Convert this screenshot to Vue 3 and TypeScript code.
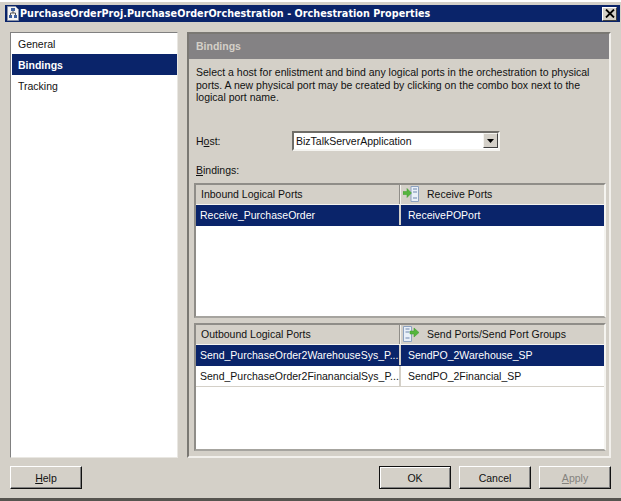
<script setup lang="ts">
const navItems = [
  { label: 'General', active: false },
  { label: 'Bindings', active: true },
  { label: 'Tracking', active: false },
]
const outboundRows = [
  { left: 'Send_PurchaseOrder2WarehouseSys_P...', right: 'SendPO_2Warehouse_SP', active: true },
  { left: 'Send_PurchaseOrder2FinanancialSys_P...', right: 'SendPO_2Financial_SP', active: false },
]
</script>

<template>
  <div class="window">
    <div class="titlebar">
      <svg class="app-icon" width="14" height="15" viewBox="0 0 14 15">
        <path d="M1.5.5h8l3 3v11h-11z" fill="#f4f4f4" stroke="#8a93a8" />
        <rect x="5" y="2" width="4" height="3" fill="#3d5f9e" />
        <rect x="3" y="9" width="3" height="3" fill="#3d5f9e" />
        <rect x="8" y="9" width="3" height="3" fill="#3d5f9e" />
        <path d="M7 5v2M4.500 9V7h5v2" fill="none" stroke="#555" />
      </svg>
      <span class="title">PurchaseOrderProj.PurchaseOrderOrchestration - Orchestration Properties</span>
      <div class="close">
        <svg width="10" height="9" viewBox="0 0 10 9">
          <path d="M1 0.500l8 8M9 0.500l-8 8" stroke="#000" stroke-width="1.800" fill="none" />
        </svg>
      </div>
    </div>

    <div class="main">
      <ul class="nav">
        <li v-for="item in navItems" :key="item.label" class="nav-item" :class="{ active: item.active }">
          {{ item.label }}
        </li>
      </ul>

      <section class="panel">
        <header class="panel-head">Bindings</header>
        <div class="panel-body">
          <p class="intro">
            Select a host for enlistment and bind any logical ports in the orchestration to physical
            ports. A new physical port may be created by clicking on the combo box next to the
            logical port name.
          </p>

          <div class="host-row">
            <label class="host-label">H<u>o</u>st:</label>
            <div class="combo">
              <span class="combo-value">BizTalkServerApplication</span>
              <div class="combo-btn">
                <svg width="7" height="4" viewBox="0 0 7 4"><path d="M0 0h7L3.500 4z" fill="#000" /></svg>
              </div>
            </div>
          </div>

          <div class="bindings-label"><u>B</u>indings:</div>

          <div class="grid grid-in">
            <div class="row head">
              <div class="cell first">Inbound Logical Ports</div>
              <div class="cell second">
                <svg class="port-icon" width="16" height="16" viewBox="0 0 16 16">
                  <path d="M8 .5h7.500v15H8z" fill="#e9f0f8" stroke="#8da2c0" />
                  <path d="M10 3h4M10 6h4M10 12h4" stroke="#6f87ad" />
                  <path d="M0 5.500h4V2.500l4.500 4.500L4 11.500V8.500H0z" fill="#55b53d" stroke="#3d9a2c" stroke-width=".5" />
                </svg>
                <span>Receive Ports</span>
              </div>
            </div>
            <div class="row data active">
              <div class="cell first">Receive_PurchaseOrder</div>
              <div class="cell second">ReceivePOPort</div>
            </div>
          </div>

          <div class="grid grid-out">
            <div class="row head">
              <div class="cell first">Outbound Logical Ports</div>
              <div class="cell second">
                <svg class="port-icon" width="16" height="16" viewBox="0 0 16 16">
                  <path d="M.5.500h8v15h-8z" fill="#e9f0f8" stroke="#8da2c0" />
                  <path d="M2.500 3h4M2.500 6h4M2.500 12h4" stroke="#6f87ad" />
                  <path d="M7 5h4V2l5 4.500L11 11V8H7z" fill="#55b53d" stroke="#3d9a2c" stroke-width=".5" />
                </svg>
                <span>Send Ports/Send Port Groups</span>
              </div>
            </div>
            <div v-for="row in outboundRows" :key="row.left" class="row data" :class="{ active: row.active }">
              <div class="cell first">{{ row.left }}</div>
              <div class="cell second">{{ row.right }}</div>
            </div>
          </div>
        </div>
      </section>
    </div>

    <footer class="actions">
      <button class="btn" type="button"><u>H</u>elp</button>
      <div class="actions-right">
        <button class="btn default" type="button">OK</button>
        <button class="btn" type="button">Cancel</button>
        <button class="btn disabled" type="button"><u>A</u>pply</button>
      </div>
    </footer>
  </div>
</template>

<style>
html, body { margin: 0; background: #d4d0c8; }
</style>

<style scoped>
.window {
  width: 621px;
  height: 501px;
  box-sizing: border-box;
  padding: 4px 0 0 5px;
  background: #d4d0c8;
  border-top: 2px solid #fff;
  border-bottom: 3px solid #56544f;
  font-family: "Liberation Sans", Arial, sans-serif;
  font-size: 10.5px;
  color: #111;
  display: flex;
  flex-direction: column;
  overflow: hidden;
}
.titlebar {
  height: 17px;
  flex: none;
  margin: -1px 1px 0 0;
  padding: 0 3px 0 1px;
  background: #0a246a;
  color: #fff;
  display: flex;
  align-items: center;
}
.app-icon { flex: none; }
.title {
  font-family: "DejaVu Sans", sans-serif;
  font-weight: 700;
  font-size: 9.65px;
  letter-spacing: 0.03px;
  flex: 1;
  white-space: nowrap;
}
.close {
  width: 15px;
  height: 14px;
  background: #d4d0c8;
  border: 1px solid;
  border-color: #fff #404040 #404040 #fff;
  box-sizing: border-box;
  display: flex;
  align-items: center;
  justify-content: center;
}
.main {
  display: flex;
  gap: 9px;
  margin: 10px 10px 0 5px;
  height: 426px;
  flex: none;
}
.nav {
  width: 168px;
  box-sizing: border-box;
  margin: 0;
  padding: 0 0 0 1px;
  list-style: none;
  background: #fff;
  border: 1px solid;
  border-color: #808080 #e9e7e2 #e9e7e2 #808080;
  flex: none;
}
.nav-item {
  height: 21px;
  line-height: 22px;
  padding-left: 6px;
}
.nav-item.active {
  background: #0a246a;
  color: #fff;
  font-weight: 700;
}
.panel {
  flex: 1;
  min-width: 0;
  box-sizing: border-box;
  border: 2px solid;
  border-color: #7a7873 #f2f0ec #f2f0ec #7a7873;
  display: flex;
  flex-direction: column;
}
.panel-head {
  height: 25px;
  line-height: 25px;
  padding-left: 7px;
  background: #848284;
  color: #d4d0c8;
  font-weight: 700;
  flex: none;
}
.panel-body {
  flex: 1;
  padding: 7px 2px 0 5px;
}
.intro {
  margin: 0 0 0 2px;
  width: 404px;
  line-height: 12.5px;
}
.host-row {
  display: flex;
  align-items: center;
  margin-top: 27px;
  height: 20px;
}
.host-label {
  width: 98px;
  padding-left: 2px;
  box-sizing: border-box;
}
.combo {
  width: 208px;
  height: 20px;
  box-sizing: border-box;
  background: #fff;
  border: 2px solid;
  border-color: #6f6d68 #f5f4f0 #f5f4f0 #6f6d68;
  display: flex;
  align-items: center;
  justify-content: space-between;
  padding-left: 2px;
}
.combo-btn {
  width: 15px;
  height: 15px;
  box-sizing: border-box;
  background: #d4d0c8;
  border: 1px solid;
  border-color: #f5f4f0 #404040 #404040 #f5f4f0;
  display: flex;
  align-items: center;
  justify-content: center;
}
.bindings-label {
  margin: 12px 0 0 2px;
  height: 14px;
  line-height: 14px;
}
.grid {
  box-sizing: border-box;
  width: 412px;
  background: #fff;
  border: 2px solid;
  border-color: #8f8d88 #f5f4f0 #a6a49f #8f8d88;
}
.grid-in { height: 135px; margin-top: 6px; }
.grid-out { height: 128px; margin-top: 5px; }
.row { display: flex; }
.head {
  height: 20px;
  line-height: 19px;
  box-sizing: border-box;
  background: #d4d0c8;
  border-bottom: 1px solid #f5f4f0;
}
.data {
  height: 21px;
  line-height: 21px;
  border-bottom: 1px solid #d4d0c8;
  box-sizing: border-box;
}
.data.active {
  background: #0a246a;
  color: #fff;
  border-bottom-color: #0a246a;
}
.cell {
  box-sizing: border-box;
  white-space: nowrap;
  overflow: hidden;
}
.first {
  width: 205px;
  padding-left: 4px;
  border-right: 2px solid #d4d0c8;
}
.second {
  flex: 1;
  padding-left: 7px;
}
.head .first {
  padding-left: 5px;
  border-right: 1px solid #8f8d88;
  width: 204px;
  box-shadow: 1px 0 0 #f5f4f0;
}
.head .second {
  display: flex;
  align-items: center;
  padding-left: 2px;
  margin-left: 1px;
}
.port-icon { flex: none; margin-right: 8px; }
.actions {
  display: flex;
  justify-content: space-between;
  margin: 8px 10px 0 5px;
}
.actions-right { display: flex; gap: 8px; }
.btn {
  width: 72px;
  height: 23px;
  padding: 0;
  background: #d4d0c8;
  font: inherit;
  color: #111;
  border: 1px solid;
  border-color: #fff #111 #111 #fff;
  box-shadow: inset -1px -1px 0 #808080;
}
.default {
  outline: 1px solid #111;
  outline-offset: -1px;
  border-color: #111;
  box-shadow: inset 1px 1px 0 #fff, inset -1px -1px 0 #808080;
}
.disabled { color: #85837e; }
</style>
